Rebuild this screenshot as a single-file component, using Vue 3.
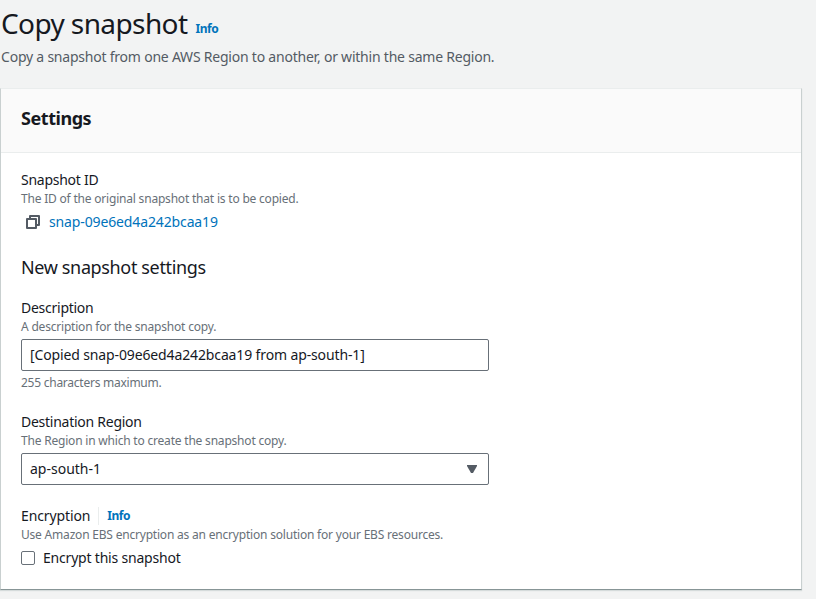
<script setup>
import { ref } from 'vue'
const description = ref('[Copied snap-09e6ed4a242bcaa19 from ap-south-1]')
</script>

<template>
  <main class="page">
    <header class="page-header">
      <div class="title-row">
        <h1>Copy snapshot</h1>
        <a class="info">Info</a>
      </div>
      <p class="intro">Copy a snapshot from one AWS Region to another, or within the same Region.</p>
    </header>
    <section class="card">
      <div class="card-header"><h2>Settings</h2></div>
      <div class="card-body">
        <div class="label">Snapshot ID</div>
        <div class="hint">The ID of the original snapshot that is to be copied.</div>
        <div class="snapshot">
          <svg class="copy" width="16" height="16" viewBox="0 0 16 16" fill="none" stroke="#545b64" stroke-width="2" stroke-linejoin="round">
            <path d="M2 5h9v9H2z" />
            <path d="M5 5V2h9v9h-3" />
          </svg>
          <a class="link">snap-09e6ed4a242bcaa19</a>
        </div>
        <h3>New snapshot settings</h3>
        <div class="label">Description</div>
        <div class="hint">A description for the snapshot copy.</div>
        <input v-model="description" class="control" type="text" />
        <div class="hint constraint">255 characters maximum.</div>
        <div class="label">Destination Region</div>
        <div class="hint">The Region in which to create the snapshot copy.</div>
        <div class="control select">
          <span>ap-south-1</span>
          <svg width="10" height="8" viewBox="0 0 10 8"><path d="M0 0h10v1L6 8H4L0 1z" fill="#545b64" /></svg>
        </div>
        <div class="label encryption">
          <span>Encryption</span>
          <a class="info divided">Info</a>
        </div>
        <div class="hint">Use Amazon EBS encryption as an encryption solution for your EBS resources.</div>
        <label class="check"><input type="checkbox" /><span>Encrypt this snapshot</span></label>
      </div>
    </section>
  </main>
</template>

<style>
body { background: #f2f3f3; overflow: hidden; }
</style>

<style scoped>
* { box-sizing: border-box; }
.page { width: 816px; height: 599px; font: 14px/22px "Noto Sans", sans-serif; color: #16191f; }
.page-header { height: 88px; }
.title-row { display: flex; align-items: flex-start; height: 46px; padding-left: 1px; }
h1 { margin: 0; padding-top: 5px; font-size: 28px; line-height: 36px; font-weight: 400; letter-spacing: -0.6px; }
.info { margin-left: 8px; font-size: 12px; font-weight: 700; letter-spacing: -0.45px; color: #0073bb; }
.title-row .info { margin-top: 18px; }
.intro { margin: 0; padding-left: 1px; letter-spacing: -0.22px; color: #545b64; }
.card { width: 802px; height: 502px; background: #fff; border: 1px solid #c9d0d0; border-top-color: #eaeded; border-bottom-color: #879596; box-shadow: 0 1px 1px #d5dbdb; }
.card-header { height: 64px; padding: 18px 20px; background: #fafafa; border-bottom: 1px solid #eaeded; }
h2 { margin: 0; font-size: 18px; line-height: 22px; font-weight: 700; letter-spacing: -0.45px; }
.card-body { padding: 16px 20px; }
.label { height: 22px; letter-spacing: -0.26px; }
.hint { font-size: 12px; line-height: 16px; letter-spacing: -0.2px; color: #687078; }
.snapshot { display: flex; align-items: center; height: 30px; padding-left: 4px; }
.link { margin-left: 8px; letter-spacing: -0.13px; color: #0073bb; }
h3 { margin: 16px 0; font-size: 18px; line-height: 28px; font-weight: 400; letter-spacing: -0.36px; }
.control { display: block; width: 468px; height: 32px; margin-top: 4px; padding: 0 8px 1px; border: 1px solid #687078; border-radius: 2px; background: #fff; color: #16191f; font: inherit; letter-spacing: -0.13px; }
.constraint { margin: 4px 0 20px; letter-spacing: -0.25px; }
.select { display: flex; align-items: center; justify-content: space-between; padding: 0 11px 0 8px; letter-spacing: 0; }
.encryption { display: flex; margin-top: 20px; letter-spacing: -0.12px; }
.divided { height: 18px; margin: 2px 0 0 8px; padding-left: 8px; border-left: 1px solid #eaeded; line-height: 18px; }
.check { display: flex; align-items: center; height: 22px; margin-top: 4px; letter-spacing: -0.2px; }
.check input { appearance: none; width: 14px; height: 14px; margin: 0 8px 0 0; border: 1px solid #687078; border-radius: 2px; background: #fff; }
</style>
